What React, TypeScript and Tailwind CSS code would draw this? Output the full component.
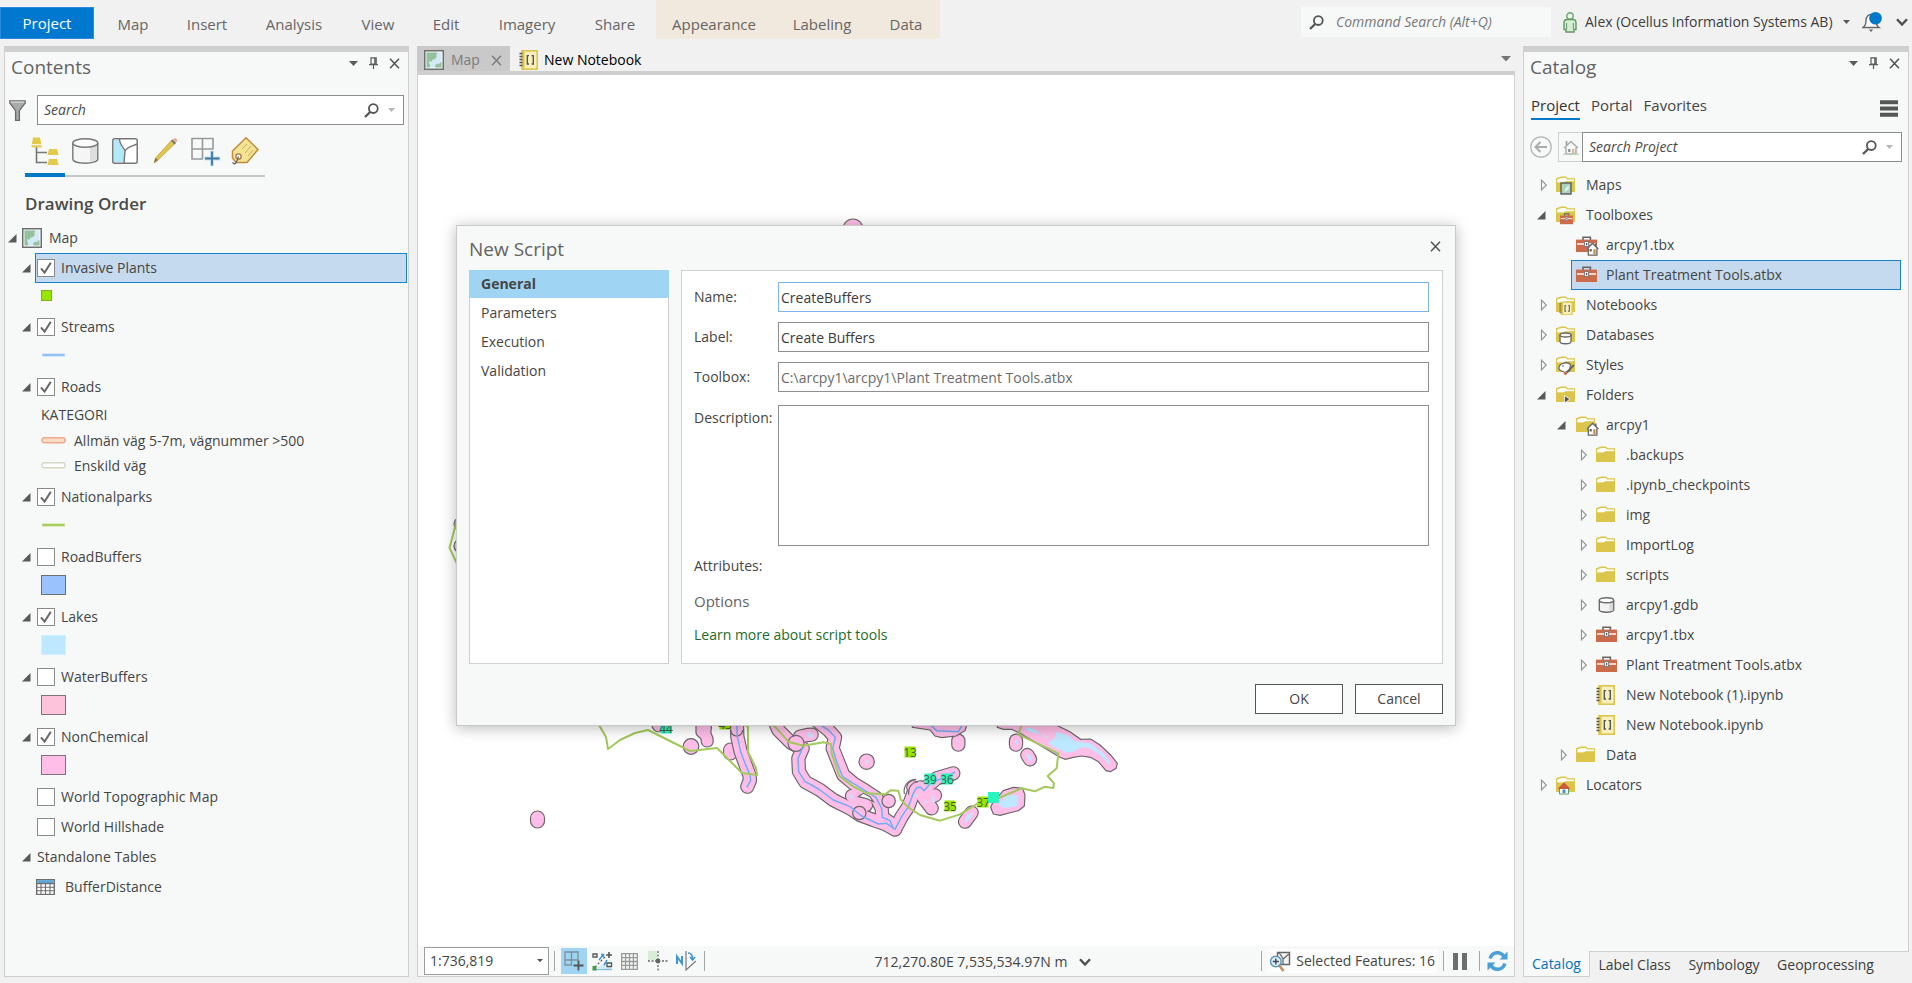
import React, { type ReactNode } from "react";

/* ---------- icons ---------- */

type BoxProps = { w: number; h: number; children: ReactNode; className?: string };

function Icon({ w, h, children, className = "" }: BoxProps) {
  return (
    <svg width={w} height={h} viewBox={`0 0 ${w} ${h}`} fill="none" aria-hidden="true" className={`shrink-0 ${className}`}>
      {children}
    </svg>
  );
}

const CloseIcon = ({ color = "#505050" }: { color?: string }) => (
  <Icon w={11} h={11}>
    <path d="M1 0.8 10 10.2M10 0.8 1 10.2" stroke={color} strokeWidth="1.5" />
  </Icon>
);

const PinIcon = () => (
  <Icon w={9} h={12}>
    <path d="M2 0.8h5.2v6.4H2zM0 7.6h9M4.5 7.6V12" stroke="#5a5a5a" strokeWidth="1.2" />
    <path d="M6 1v6" stroke="#5a5a5a" strokeWidth="1.6" />
  </Icon>
);

const DownIcon = ({ color = "#5a5a5a", size = 9 }: { color?: string; size?: number }) => (
  <svg width={size} height={(size * 5) / 9} viewBox="0 0 9 5" aria-hidden="true" className="shrink-0">
    <path d="M0 0h9L4.5 5z" fill={color} />
  </svg>
);

const ChevronIcon = () => (
  <Icon w={12} h={9}>
    <path d="M1 1.2 6 6.6 11 1.2" stroke="#4f4f4f" strokeWidth="2.4" />
  </Icon>
);

const SearchIcon = ({ color = "#555" }: { color?: string }) => (
  <Icon w={15} h={15}>
    <circle cx="9.3" cy="5.6" r="4.4" stroke={color} strokeWidth="1.8" />
    <path d="M6.2 9 1 14" stroke={color} strokeWidth="2.4" />
  </Icon>
);

const FilterIcon = () => (
  <Icon w={17} h={21}>
    <path d="M0.8 1h15.4v2L10.4 10.6V20.4H6.6V10.6L0.8 3z" fill="#a9a9a9" stroke="#6a6a6a" strokeWidth="1.3" />
    <path d="M1.5 2h14" stroke="#f2f2f2" strokeWidth="1" />
  </Icon>
);

const MapIcon = () => (
  <Icon w={20} h={20}>
    <rect x="0.75" y="0.75" width="18.5" height="18.5" fill="#fff" stroke="#6e6e6e" strokeWidth="1.5" />
    <rect x="2.5" y="2.5" width="15" height="15" fill="#d3e9f8" />
    <path d="M2.5 2.5H13.5l-1.2 2.2.4 2.3-2 2.2-2 .3-1.2 2.3-2-.7-.6 2.5 1.4 1.2-.4 2.7H2.5z" fill="#96c29b" />
    <path d="M17.5 17.5h-6l-.4-1.8 1.6-2 2.3.4 1.6-1.8h.9z" fill="#96c29b" />
  </Icon>
);

const NotebookGlyph = () => (
  <>
    <rect x="3" y="0.8" width="15.2" height="18.4" fill="#f7f0bd" stroke="#dcc649" strokeWidth="1.6" />
    <path d="M4.6 1.5v17" stroke="#dcc649" strokeWidth="2" />
    <path d="M0.5 3.5h3M0.5 6.5h3M0.5 9.5h3M0.5 12.5h3M0.5 15.5h3" stroke="#555" strokeWidth="1.3" />
    <path d="M10 5.6H8.3v8.4H10M12.6 5.6h1.7v8.4h-1.7" stroke="#555" strokeWidth="1.4" />
  </>
);

const NotebookIcon = () => (
  <Icon w={20} h={20}>
    <NotebookGlyph />
  </Icon>
);

const FolderShape = () => (
  <>
    <path d="M0 2.2 5 0.6h5L11.5 2.2H19V16H0z" fill="#dbc54a" />
    <path d="M1.2 3.6 5.6 2H9.6L11 3.4h7v2.400H9L7.5 6.800H1.2z" fill="#fff" />
    <path d="M0 6.600h7.500L9.500 5.200H19V16H0z" fill="#dbc54a" />
  </>
);

const FolderIcon = ({ children }: { children?: ReactNode }) => (
  <Icon w={22} h={20}>
    <g transform="translate(0 1)">
      <FolderShape />
    </g>
    {children}
  </Icon>
);

const ToolboxShape = () => (
  <>
    <path d="M7 4V1.2h7.4V4" stroke="#666" strokeWidth="1.6" fill="none" />
    <path d="M0 3.6h21V16H0z" fill="#cb6b4a" />
    <path d="M1 8h19" stroke="#fff" strokeWidth="1.4" />
    <rect x="8.6" y="5.6" width="4" height="5" fill="#f5f5f5" stroke="#777" strokeWidth="0.9" />
    <path d="M10.6 7v2.2" stroke="#555" strokeWidth="1.2" />
  </>
);

const HomeBadge = () => (
  <>
    <path d="M10.5 14 16.500 7.500 22.500 14z" fill="#fff" />
    <path d="M12.300 13.500v6.700h8.600v-6.700L16.600 9z" fill="#fff" />
    <path d="M12.300 13.500v6.600h8.600v-6.600" stroke="#666" strokeWidth="1.300" />
    <path d="M11 14 16.600 8.200 22.300 14M19.800 8.500v3" stroke="#666" strokeWidth="1.500" />
    <path d="M13.600 14h2.200v2.500h-2.200z" fill="#666" />
    <path d="M17.300 14.200h2.300v5.300h-2.300z" fill="#c98b4a" />
  </>
);

const ToolboxIcon = ({ home = false }: { home?: boolean }) => (
  <Icon w={23} h={21}>
    <g transform="translate(0 1)">
      <ToolboxShape />
    </g>
    {home && <HomeBadge />}
  </Icon>
);

const DbIcon = () => (
  <Icon w={20} h={20}>
    <g transform="translate(2.5 2)">
      <path d="M0.8 3.2v9.6c0 3.2 14.4 3.2 14.4 0V3.2" fill="#f4f4f4" stroke="#6b6b6b" strokeWidth="1.4" />
      <path d="M11 6v8.6l3.6-1.2V4.8z" fill="#d8d8d8" />
      <ellipse cx="8" cy="3.2" rx="7.2" ry="2.5" fill="#fff" stroke="#6b6b6b" strokeWidth="1.4" />
    </g>
  </Icon>
);

const TableIcon = () => (
  <Icon w={19} h={16}>
    <rect x="0.7" y="0.7" width="17.6" height="14.8" fill="#fff" stroke="#6e6e6e" strokeWidth="1.4" />
    <rect x="1.4" y="1.2" width="16.2" height="3" fill="#5ba6d6" />
    <path d="M0.7 4.6h17.6M0.7 8.2h17.6M0.7 11.8h17.6M5 4.6v11M9.5 4.6v11M14 4.6v11" stroke="#6e6e6e" strokeWidth="1.1" />
  </Icon>
);

/* ---------- contents toolbar icons ---------- */

const ListOrderIcon = () => (
  <Icon w={28} h={28}>
    <path d="M5.5 9v16.5H16M5.5 15.5H16" stroke="#777" strokeWidth="1.6" />
    <path d="M2 0.5h7l1.3 7H0.7z" fill="#e2cb48" />
    <path d="M0.5 8h10.2v2.4H0.5z" fill="#e2cb48" />
    <path d="M0.8 7.8h9.6" stroke="#fff" strokeWidth="0.9" />
    <path d="M18 12h8l1.5 6H16.4zM18 22h8l1.5 6H16.4z" fill="#e2cb48" />
  </Icon>
);

const SourceIcon = () => (
  <Icon w={27} h={26}>
    <path d="M0.8 5v16c0 5.6 25 5.6 25 0V5" fill="#f5f5f5" stroke="#777" strokeWidth="1.4" />
    <path d="M18 9.5v14.6l7-2.5V6z" fill="#dedede" />
    <ellipse cx="13.3" cy="5" rx="12.5" ry="4.2" fill="#fafafa" stroke="#777" strokeWidth="1.4" />
  </Icon>
);

const SelectionIcon = () => (
  <Icon w={26} h={26}>
    <rect x="0.8" y="0.8" width="24.4" height="24.4" rx="2" fill="#fff" stroke="#777" strokeWidth="1.5" />
    <path d="M2 2h5.5c0 6 5 9 5.5 12l-1 10H2z" fill="#b3e8f8" />
    <path d="M7.5 1c0 6 5 9 5.5 12l-1 12M13 13c1.5-4 6-4.500 12-7" stroke="#777" strokeWidth="1.4" />
  </Icon>
);

const PencilIcon = () => (
  <Icon w={25} h={26}>
    <path d="M19 1.800 22.500 5 5 22 1.500 24.500 2.500 20z" fill="#dfc64a" stroke="#b89f2e" strokeWidth="0.7" />
    <path d="M18 3l3.500 3.500 1.500-1.500-3.500-3.500z" fill="#777" />
    <path d="M20 1.200 21.500 0.200c1.500-.2 3 1.300 2.700 2.800L23 4.300z" fill="#e8a094" />
    <path d="M2.500 20 5 22 0.800 25.200z" fill="#9a6a3a" />
  </Icon>
);

const SnapIcon = () => (
  <Icon w={29} h={29}>
    <path d="M1 1.500h21v10.500H1zM11.500 1.500V22M1 12v10h11" stroke="#999" strokeWidth="1.600" />
    <path d="M21 14v15M13.500 21.500H29" stroke="#b9dff6" strokeWidth="4" />
    <path d="M21 14.500v14M14 21.500h14.500" stroke="#47749a" strokeWidth="1.800" />
  </Icon>
);

const TagIcon = () => (
  <Icon w={28} h={28}>
    <path d="M15 0.800 27 12.500 16 25.500H5L1.500 21V14z" fill="#f3e493" stroke="#bd8d3c" strokeWidth="1.500" />
    <path d="M11 12l5-5M14 16l6-7M17 19l5-6" stroke="#d4a862" strokeWidth="1" />
    <circle cx="7.500" cy="19.500" r="2.700" fill="#fff" stroke="#a8703c" strokeWidth="1.300" />
    <path d="M7.500 19.500C6.500 22 6 26 3.500 27L1.500 25.500" stroke="#666" strokeWidth="1.300" />
  </Icon>
);

/* ---------- shared parts ---------- */

const Expander = ({ open }: { open: boolean }) => (
  <button type="button" aria-label={open ? "Collapse" : "Expand"} className="flex shrink-0 items-center">
    {open ? (
      <Icon w={9} h={9}>
        <path d="M8.500 0V8.500H0z" fill="#595959" />
      </Icon>
    ) : (
      <Icon w={8} h={12}>
        <path d="M1.500 1.200 6.200 6 1.500 10.800z" fill="#fff" stroke="#949494" strokeWidth="1.200" />
      </Icon>
    )}
  </button>
);

function PanelTitle({ children }: { children: ReactNode }) {
  return (
    <div className="flex h-[30px] items-center justify-between pr-2 pl-1.5">
      <h2 className="text-[19px] leading-6 text-[#636363]">{children}</h2>
      <div className="flex items-center gap-[11px] pb-2">
        <button type="button" aria-label="Window options">
          <DownIcon />
        </button>
        <button type="button" aria-label="Auto hide">
          <PinIcon />
        </button>
        <button type="button" aria-label="Close pane">
          <CloseIcon />
        </button>
      </div>
    </div>
  );
}

function SearchBox({ id, text }: { id: string; text: string }) {
  return (
    <div className="flex h-[30px] min-w-0 flex-1 items-center gap-[9px] border border-[#8c8c8c] bg-white pr-2 pl-1.5">
      <input
        id={id}
        aria-label={text}
        placeholder={text}
        className="min-w-0 flex-1 bg-transparent text-sm italic outline-none placeholder:text-[#4a4a4a]"
      />
      <button type="button" aria-label="Run search">
        <SearchIcon />
      </button>
      <DownIcon color="#b5b5b5" size={7} />
    </div>
  );
}

/* ---------- ribbon ---------- */

const ribbonTabs = [
  { name: "Map", width: "w-[70px]" },
  { name: "Insert", width: "w-[78px]" },
  { name: "Analysis", width: "w-[96px]" },
  { name: "View", width: "w-[72px]" },
  { name: "Edit", width: "w-[64px]" },
  { name: "Imagery", width: "w-[98px]" },
  { name: "Share", width: "w-[78px]" },
];

const contextTabs = [
  { name: "Appearance", width: "w-[116px]" },
  { name: "Labeling", width: "w-[100px]" },
  { name: "Data", width: "w-[68px]" },
];

function Ribbon() {
  return (
    <header className="flex h-[46px] shrink-0 items-start justify-between">
      <nav className="flex h-[39px] text-[15px] text-[#666]">
        <button type="button" className="mt-[7px] w-[94px] border border-[#2a8adf] bg-[#0078d0] pb-1 text-white">
          <span className="block pt-1">Project</span>
        </button>
        <div className="ml-1 flex">
          {ribbonTabs.map((t) => (
            <button key={t.name} type="button" className={`pt-[9px] ${t.width}`}>
              {t.name}
            </button>
          ))}
        </div>
        <div className="ml-0.5 flex bg-[#f1e9de]">
          {contextTabs.map((t) => (
            <button key={t.name} type="button" className={`pt-[9px] ${t.width}`}>
              {t.name}
            </button>
          ))}
        </div>
      </nav>
      <div className="flex items-center pt-[7px] pr-1">
        <div className="flex h-[30px] w-[250px] items-center gap-3 bg-[#f7f9f8] px-2">
          <SearchIcon />
          <input
            aria-label="Command Search"
            placeholder="Command Search (Alt+Q)"
            className="min-w-0 flex-1 bg-transparent text-sm italic outline-none placeholder:text-[#777]"
          />
        </div>
        <button type="button" className="ml-3 flex items-center gap-2 text-sm text-[#3c3c3c]">
          <Icon w={14} h={21}>
            <circle cx="7" cy="4" r="3.200" fill="#eaf5ea" stroke="#6ea56e" strokeWidth="1.400" />
            <path d="M1 11c0-2.500 1.500-3.500 3-3.500h6c1.500 0 3 1 3 3.500v6.500h-2V20H3v-2.500H1z" fill="#d7ecd5" stroke="#5f9b60" strokeWidth="1.400" />
            <path d="M3.600 11v6M10.400 11v6" stroke="#5f9b60" strokeWidth="1" />
          </Icon>
          <span className="w-[250px] text-left whitespace-nowrap">Alex (Ocellus Information Systems AB)</span>
          <DownIcon size={7} />
        </button>
        <button type="button" aria-label="Notifications" className="ml-3">
          <Icon w={20} h={20}>
            <path d="M1 15.500c3-2 3-4 3-7 0-4 2.500-6 5-6s5 2 5 6c0 3 0 5 3 7z" fill="#fff" stroke="#666" strokeWidth="1.400" />
            <path d="M6.800 17.500h4.400L9 20z" fill="#666" />
            <circle cx="13.500" cy="6.300" r="6.300" fill="#0079c8" />
          </Icon>
        </button>
        <button type="button" aria-label="Minimize ribbon" className="ml-3.5">
          <ChevronIcon />
        </button>
      </div>
    </header>
  );
}

/* ---------- contents pane ---------- */

function Check({ name, checked }: { name: string; checked: boolean }) {
  return (
    <span className="grid shrink-0">
      <input
        id={`layer-${name}`}
        type="checkbox"
        defaultChecked={checked}
        className="peer col-start-1 row-start-1 size-[18px] appearance-none border border-[#8a8a8a] bg-white"
      />
      <svg
        viewBox="0 0 18 18"
        aria-hidden="true"
        className="pointer-events-none invisible col-start-1 row-start-1 size-[18px] peer-checked:visible"
      >
        <path d="M4 9.300 7.600 13.600 13.800 3.800" fill="none" stroke="#666" strokeWidth="2" />
      </svg>
    </span>
  );
}

type LayerProps = { name: string; checked?: boolean; selected?: boolean; leaf?: boolean };

function Layer({ name, checked = false, selected = false, leaf = false }: LayerProps) {
  const tone = selected ? "border-[#1a7fc4] bg-[#c5daee]" : "border-transparent";
  return (
    <div className="flex h-[30px] items-center pr-px pl-[17px]">
      <div className="w-[13px]">{!leaf && <Expander open />}</div>
      <div className={`flex h-full flex-1 items-center gap-1.5 border pl-px ${tone}`}>
        <Check name={name} checked={checked} />
        <label htmlFor={`layer-${name}`}>{name}</label>
      </div>
    </div>
  );
}

const SymbolRow = ({ children }: { children: ReactNode }) => (
  <div className="flex h-[30px] items-center pb-1 pl-9">{children}</div>
);

const LineSymbol = ({ color, halo }: { color: string; halo: string }) => (
  <Icon w={25} h={6}>
    <path d="M1 3h23" stroke={halo} strokeWidth="3.500" />
    <path d="M1.500 3h22" stroke={color} strokeWidth="1.800" />
  </Icon>
);

const RoadSymbol = ({ fill, line }: { fill: string; line: string }) => (
  <Icon w={25} h={7}>
    <rect x="0.800" y="0.800" width="23.400" height="5" rx="2.500" fill={fill} stroke={line} strokeWidth="1.400" />
  </Icon>
);

const listModes = [
  { name: "List by drawing order", icon: <ListOrderIcon /> },
  { name: "List by source", icon: <SourceIcon /> },
  { name: "List by selection", icon: <SelectionIcon /> },
  { name: "List by editing", icon: <PencilIcon /> },
  { name: "List by snapping", icon: <SnapIcon /> },
  { name: "List by labeling", icon: <TagIcon /> },
];

function ContentsPane() {
  return (
    <aside className="w-[405px] shrink-0 border border-t-[6px] border-[#cfcfcf] bg-[#f7f9f8]">
      <PanelTitle>Contents</PanelTitle>
      <div className="mt-[13px] flex items-center gap-[11px] px-1">
        <FilterIcon />
        <SearchBox id="contents-search" text="Search" />
      </div>
      <div className="mt-1 ml-5 flex items-end">
        {listModes.map((m, i) => (
          <button
            key={m.name}
            type="button"
            aria-label={m.name}
            className={`flex h-12 w-10 items-center justify-center ${i === 0 ? "border-b-4 border-[#0079c8]" : "border-b-2 border-[#c6c6c6] pb-0.5"}`}
          >
            {m.icon}
          </button>
        ))}
      </div>
      <h3 className="mt-[13px] pl-5 text-[17px] leading-7 font-semibold text-[#4a4a4a]">Drawing Order</h3>
      <div className="mt-[5px] text-sm text-[#454545]">
        <div className="flex h-[30px] items-center pl-[3px]">
          <div className="w-3.5">
            <Expander open />
          </div>
          <MapIcon />
          <span className="pl-[7px]">Map</span>
        </div>
        <Layer name="Invasive Plants" checked selected />
        <div className="flex h-[29px] items-center pb-1 pl-9">
          <span className="size-[11px] border border-[#7fae22] bg-[#98e600]" />
        </div>
        <Layer name="Streams" checked />
        <SymbolRow>
          <LineSymbol color="#8dbdfb" halo="#cfe3fd" />
        </SymbolRow>
        <Layer name="Roads" checked />
        <div className="flex h-[26px] items-center pl-9 font-medium">KATEGORI</div>
        <div className="flex h-[25px] items-center gap-2 pl-9">
          <RoadSymbol fill="#fcdcc6" line="#eeaa8e" />
          Allmän väg 5-7m, vägnummer &gt;500
        </div>
        <div className="mb-1 flex h-[25px] items-center gap-2 pl-9">
          <RoadSymbol fill="#fff" line="#d5d7c3" />
          Enskild väg
        </div>
        <Layer name="Nationalparks" checked />
        <SymbolRow>
          <LineSymbol color="#a3cc55" halo="#d5e7b4" />
        </SymbolRow>
        <Layer name="RoadBuffers" />
        <SymbolRow>
          <span className="h-5 w-[25px] border border-[#6e6e6e] bg-[#9ac2fc]" />
        </SymbolRow>
        <Layer name="Lakes" checked />
        <SymbolRow>
          <span className="h-5 w-[25px] border border-[#d3effe] bg-[#bee8ff]" />
        </SymbolRow>
        <Layer name="WaterBuffers" />
        <SymbolRow>
          <span className="h-5 w-[25px] border border-[#807279] bg-[#fcc3da]" />
        </SymbolRow>
        <Layer name="NonChemical" checked />
        <SymbolRow>
          <span className="h-5 w-[25px] border border-[#80707c] bg-[#ffbee8]" />
        </SymbolRow>
        <Layer name="World Topographic Map" leaf />
        <Layer name="World Hillshade" leaf />
        <div className="flex h-[30px] items-center pl-[17px]">
          <div className="w-[15px]">
            <Expander open />
          </div>
          <span className="font-medium">Standalone Tables</span>
        </div>
        <div className="flex h-[30px] items-center gap-2.5 pl-[31px]">
          <TableIcon />
          <span>BufferDistance</span>
        </div>
      </div>
    </aside>
  );
}

/* ---------- map canvas ---------- */

type LabelProps = { x: number; y: number; text: string; color: string };

const MapLabel = ({ x, y, text, color }: LabelProps) => (
  <g>
    <rect x={x - 5.5} y={y - 5.5} width="11" height="11" fill={color} />
    <text x={x} y={y + 4.5} textAnchor="middle" fontSize="12" fontFamily="'Open Sans', sans-serif" fill="#4b5f40">
      {text}
    </text>
  </g>
);

const riverOutlines = [
  "M50 50 52 110 62 155 75 190 88 225 90 240 82 260",
  "M160 55 175 90 215 130 248 145 235 175 237 215 255 245 300 270 340 300 390 325 420 345 460 360 495 372 525 388",
  "M290 62 325 90 345 112 338 145 350 175 370 225 400 250 440 275 470 295 485 325 487 352 520 375",
  "M525 388 545 350 565 320 580 280 600 262 615 265 650 235 700 220",
  "M240 110 262 105 275 104",
  "M396 288 410 300 438 315",
  "M580 262 605 285 635 325M615 300 645 286",
  "M715 122 715 134",
  "M888 122 888 134",
  "M922 165 930 178",
  "M735 365 755 338",
];

function MapCanvas() {
  return (
    <svg
      viewBox="418 75 1096 871"
      preserveAspectRatio="xMinYMin slice"
      fill="none"
      role="img"
      aria-label="Map"
      className="block size-full"
    >
      <circle cx="853" cy="229" r="10" fill="#ffbee8" stroke="#6b666a" strokeWidth="1.2" />
      <circle cx="460" cy="524" r="6" fill="#ffbee8" stroke="#6b666a" strokeWidth="1.2" />
      <circle cx="461" cy="546" r="7" fill="#ffbee8" stroke="#6b666a" strokeWidth="1.2" />
      <path d="M459 512 449.500 548 460 570" stroke="#a3c95c" strokeWidth="2" />

      <g fill="#ffbee8" stroke="#6b666a" strokeWidth="1.2">
        <rect x="530.500" y="811" width="14" height="17" rx="7" />
        <circle cx="659" cy="725" r="7" />
        <circle cx="691" cy="746.500" r="7.800" />
        <path d="M696 720v13c0 3 4 4 5 6 0 3 1 8 6 8s7-4 6-8c0-4-3-5-2-8l1-11z" />
        <rect x="723.500" y="743" width="14" height="17" rx="7" />
        <circle cx="857" cy="721" r="4.500" />
      </g>

      <g transform="translate(720 700) scale(0.33333)">
        <g strokeLinecap="round" strokeLinejoin="round">
          {riverOutlines.map((d) => (
            <path key={d} d={d} stroke="#6b666a" strokeWidth="43" />
          ))}
          {riverOutlines.map((d) => (
            <path key={d} d={d} stroke="#ffbee8" strokeWidth="36" />
          ))}
        </g>
        <g stroke="#6b666a" strokeWidth="3.500">
          <circle cx="440" cy="185" r="23" fill="#ffbee8" />
          <circle cx="506" cy="303" r="20" fill="#ffbee8" />
          <circle cx="418" cy="339" r="20" />
          <circle cx="228" cy="130" r="24" />
          <path d="M32 90a18 18 0 0 0 36 0" />
          <path d="M553 282c-4-28 14-44 36-44M566 284c-2-22 10-38 28-38" />
          <path d="M575 62 577 82 630 90 645 108 665 113 708 108 735 92 745 62z" fill="#ffbee8" />
          <path d="M832 62 832 82 850 88 875 88 900 100 1020 172 1036 178 1060 172 1085 168 1112 172 1135 185 1158 212 1172 215 1188 205 1192 190 1172 165 1140 135 1112 117 1082 118 1050 95 1010 76 990 62z" fill="#ffbee8" />
          <path d="M812 322 818 308 850 272 880 262 908 265 915 285 913 318 895 332 840 346 820 342z" fill="#ffbee8" strokeLinejoin="round" />
          <circle cx="413" cy="64" r="12" />
        </g>
        <g fill="#bee8ff">
          <path d="M985 128 1005 112 1010 95 1025 100 1048 108 1062 122 1090 128 1110 128 1150 160 1172 190 1165 192 1140 165 1110 145 1085 142 1060 155 1035 158 1020 148 1000 142z" />
          <path d="M835 312 850 300 855 288 888 284 896 290 892 318 868 322 850 324z" />
          <path d="M733 366 742 345 760 336 752 352 740 366z" />
          <path d="M258 100 270 97 280 108 272 114z" />
          <path d="M918 160 930 164 938 185 928 182z" />
          <path d="M435 183 445 181 446 187 438 190z" />
          <path d="M385 280 400 290 400 298 390 292z" />
          <path d="M636 290 642 288 644 306 638 310z" />
          <path d="M584 282 594 284 592 292 582 288z" />
          <path d="M612 304 622 302 620 308 614 310z" />
          <path d="M915 82 945 88 962 102 940 98 922 92z" />
          <path d="M965 100 985 112 978 114z" />
          <path d="M884 122 892 120 890 134z" />
          <path d="M712 122 716 120 716 130z" />
        </g>
        <g fill="#fff" stroke="#6b666a" strokeWidth="3.500">
          <path d="M415 290 430 280 450 290 460 305 440 296z" />
        </g>
        <g stroke="#72adf7" strokeWidth="4.500" strokeLinejoin="round">
          <path d="M50 62 52 110 62 155 75 190 90 225 92 242 80 262" />
          <path d="M248 143 234 175 236 215 255 245 275 255 300 270 340 300 390 320 425 348 475 372 500 370 525 388 545 350 565 320 580 280 590 263 602 262 612 272 632 250 665 235 690 225 705 216" />
          <path d="M290 68 325 90 346 112 338 145 350 185 368 230 400 250 440 275 468 292 485 325 487 352 510 362 520 385" />
          <path d="M632 75 650 92 715 95 725 78" />
        </g>
        <path
          d="M135 62 165 80 205 125 250 137 310 127 333 132 335 160 358 228 400 260 440 280 495 283 512 271 535 272 542 298 565 322 600 345 660 362 720 343 790 300 820 300 850 288 905 265 945 274 975 260 1000 264 1002 250 983 228 1010 205 1015 160 895 103 905 75"
          stroke="#a3c95c"
          strokeWidth="6"
          strokeLinejoin="round"
        />
      </g>
      <path
        d="M596 720 599 725 606 737 608 749 620 740 635 733 648 730 690 751 717 748 742 773 757 775 756 768 748 752 748 727 741 722"
        stroke="#a3c95c"
        strokeWidth="2"
        strokeLinejoin="round"
      />
      <MapLabel x={666} y={728} text="44" color="#26f5c0" />
      <MapLabel x={725} y={724} text="43" color="#98e600" />
      <MapLabel x={910} y={752} text="13" color="#98e600" />
      <MapLabel x={930} y={779} text="39" color="#26f5c0" />
      <MapLabel x={947} y={779} text="36" color="#26f5c0" />
      <MapLabel x={950} y={806} text="35" color="#98e600" />
      <MapLabel x={983} y={802} text="37" color="#98e600" />
      <rect x="988" y="792" width="11" height="11" fill="#26f5c0" />
    </svg>
  );
}

/* ---------- centre view ---------- */

const Divider = () => <span className="h-5 w-px shrink-0 bg-[#a5a5a5]" />;

function StatusBar() {
  return (
    <footer className="grid h-[30px] shrink-0 grid-cols-[1fr_auto_1fr] items-center bg-[#f7f9f8] px-1.5 text-sm text-[#454545]">
      <div className="flex items-center">
        <div className="grid w-[125px] items-center">
          <select
            aria-label="Map scale"
            className="col-start-1 row-start-1 h-7 w-full appearance-none border border-[#9c9c9c] bg-white pl-[5px] text-sm"
          >
            <option>1:736,819</option>
          </select>
          <span className="pointer-events-none col-start-1 row-start-1 justify-self-end pr-1.5">
            <DownIcon size={6} />
          </span>
        </div>
        <span className="flex items-center pl-[5px]">
          <Divider />
        </span>
        <button type="button" aria-label="Snapping" className="ml-1.5 flex h-[26px] w-[26px] items-center justify-center bg-[#9fd4f3]">
          <Icon w={20} h={20}>
            <path d="M1 1h13v8H1zM7.500 1v13M1 9v5h7" stroke="#7d8f9b" strokeWidth="1.300" />
            <path d="M14.500 9.500v10M9.500 14.500h10" stroke="#555" strokeWidth="1.800" />
          </Icon>
        </button>
        <button type="button" aria-label="Dynamic constraints" className="ml-[5px]">
          <Icon w={21} h={20}>
            <path d="M3 17 19 10v8z" fill="#cfeaf6" />
            <path d="M1 3h4v3H1zM15 12h4.500v3.500H15z" fill="#fff" stroke="#555" strokeWidth="1.300" />
            <path d="M17 1v6M14 4h6" stroke="#555" strokeWidth="1.600" />
            <path d="M3 16 14 5" stroke="#555" strokeWidth="1.200" strokeDasharray="2 2" />
            <path d="M7 9l4-5M9 3.500h2.500V6M12 14l3-5" stroke="#3f95d0" strokeWidth="1.500" />
            <path d="M2 18.500h18" stroke="#7bbce6" strokeWidth="1.300" />
            <rect x="0.500" y="15" width="4" height="4.500" fill="#459a4b" />
          </Icon>
        </button>
        <button type="button" aria-label="Grid" className="ml-2">
          <Icon w={17} h={17}>
            <path d="M0.700 0.700h15.600v15.600H0.700zM4.600 0.700v15.600M8.500 0.700v15.600M12.400 0.700v15.600M0.700 4.600h15.600M0.700 8.500h15.600M0.700 12.400h15.600" stroke="#999" strokeWidth="1.300" />
          </Icon>
        </button>
        <button type="button" aria-label="Inference" className="ml-2.5">
          <Icon w={20} h={20}>
            <rect width="9" height="9" fill="#d9ecd5" />
            <path d="M10 0v20M0 10h20" stroke="#666" strokeWidth="1.300" strokeDasharray="2 1.500" />
            <rect x="8" y="8" width="4" height="4" fill="#666" />
          </Icon>
        </button>
        <button type="button" aria-label="North direction" className="ml-2">
          <Icon w={20} h={20}>
            <path d="M1 13V5.500l5 7V5" stroke="#3f95d0" strokeWidth="2" />
            <path d="M10 0v19L20 10" stroke="#777" strokeWidth="1.200" />
            <path d="M12 2c3 0 4.500 2 4.500 6M14 6l2.500 3L19 6" stroke="#3f95d0" strokeWidth="1.600" />
          </Icon>
        </button>
        <span className="flex items-center pl-2">
          <Divider />
        </span>
      </div>
      <div className="flex items-center gap-3 pt-0.5 pl-[34px]">
        <span className="whitespace-nowrap">712,270.80E 7,535,534.97N m</span>
        <button type="button" aria-label="Coordinate format">
          <ChevronIcon />
        </button>
      </div>
      <div className="flex items-center justify-end">
        <Divider />
        <button type="button" className="ml-[5px] flex h-6 items-center gap-[5px] bg-[#fdfdfd] pr-[3px] pl-0.5 whitespace-nowrap">
          <Icon w={22} h={21}>
            <path d="M8.500 1.500h12v12h-12z" fill="#f2f2f2" stroke="#666" strokeWidth="1.400" />
            <path d="M9 2c3 0 3 3 5 6l6-5M14 8v5" stroke="#666" strokeWidth="1.200" />
            <path d="m10 14 4.500 6" stroke="#c99058" strokeWidth="2.600" />
            <circle cx="6.800" cy="10.500" r="5.300" fill="#d9effa" stroke="#5b93b8" strokeWidth="1.400" />
            <path d="M6.800 7.500v6M3.800 10.500h6" stroke="#444" strokeWidth="1.400" />
          </Icon>
          Selected Features: 16
        </button>
        <span className="flex items-center px-[5px]">
          <Divider />
        </span>
        <button type="button" aria-label="Pause drawing" className="mr-[11px] ml-1">
          <Icon w={15} h={17}>
            <path d="M0 0h5v17H0zM9 0h5v17H9z" fill="#6c6c6c" />
          </Icon>
        </button>
        <Divider />
        <button type="button" aria-label="Refresh" className="ml-[7px]">
          <Icon w={21} h={20}>
            <path d="M3 7.500C5.500 0.500 13.500 0 17 5.500" stroke="#4a9fd9" strokeWidth="3.400" />
            <path d="M20.500 0.500V8.500H12.500z" fill="#4a9fd9" />
            <path d="M18 12.500C15.500 19.500 7.500 20 4 14.500" stroke="#4a9fd9" strokeWidth="3.400" />
            <path d="M0.500 19.500V11.500H8.500z" fill="#4a9fd9" />
          </Icon>
        </button>
      </div>
    </footer>
  );
}

function MapView() {
  return (
    <main className="flex min-w-0 flex-1 flex-col">
      <div className="flex h-[29px] shrink-0 items-center justify-between border-b-4 border-[#cfcfcf] pr-1">
        <div className="flex h-full items-center text-sm">
          <div className="flex h-full w-[93px] items-center bg-[#c9c9c9] pt-[3px] pl-[7px] text-[#7b7b7b]">
            <MapIcon />
            <span className="w-[47px] pl-[7px]">Map</span>
            <button type="button" aria-label="Close Map">
              <CloseIcon color="#7b7b7b" />
            </button>
          </div>
          <button type="button" className="flex items-center gap-[5px] pt-[3px] pl-[9px] text-black">
            <NotebookIcon />
            New Notebook
          </button>
        </div>
        <button type="button" aria-label="Open views">
          <DownIcon color="#757575" size={10} />
        </button>
      </div>
      <div className="flex flex-1 flex-col border border-t-0 border-[#cfcfcf]">
        <div className="min-h-0 flex-1 basis-0 overflow-hidden bg-white">
          <MapCanvas />
        </div>
        <StatusBar />
      </div>
    </main>
  );
}

/* ---------- catalog pane ---------- */

const indent = ["pl-[13px]", "pl-[33px]", "pl-[53px]"];

type NodeProps = { level?: 0 | 1 | 2; name: string; icon: ReactNode; open?: boolean; selected?: boolean };

function TreeNode({ level = 0, name, icon, open, selected = false }: NodeProps) {
  const tone = selected ? "border-[#1a7fc4] bg-[#c5daee]" : "border-transparent";
  return (
    <li className={`flex h-[30px] items-center pr-[7px] ${indent[level]}`}>
      <div className={`w-3.5 ${open ? "" : "pl-[3px]"}`}>{open !== undefined && <Expander open={open} />}</div>
      <div className={`flex h-full flex-1 items-center border pl-1 ${tone}`}>
        <span className="w-[30px]">{icon}</span>
        <span>{name}</span>
      </div>
    </li>
  );
}

const catalogTabs = [
  { name: "Label Class", width: "w-[89px]" },
  { name: "Symbology", width: "w-[90px]" },
  { name: "Geoprocessing", width: "w-[113px]" },
];

function CatalogPane() {
  return (
    <aside className="flex w-[386px] shrink-0 flex-col">
      <div className="flex-1 border-x border-t-[6px] border-[#cfcfcf] bg-[#f7f9f8]">
        <PanelTitle>Catalog</PanelTitle>
        <div className="mt-[10px] flex items-center justify-between pr-2.5 pl-[7px] text-[15px] text-[#454545]">
          <div className="flex h-7 gap-[11px]">
            <button type="button" className="h-full border-b-2 border-[#0079c8] font-medium text-[#333]">
              Project
            </button>
            <button type="button" className="h-full border-b-2 border-transparent">
              Portal
            </button>
            <button type="button" className="h-full border-b-2 border-transparent">
              Favorites
            </button>
          </div>
          <button type="button" aria-label="Menu" className="pt-1">
            <Icon w={18} h={17}>
              <path d="M0 2.200h18M0 8.500h18M0 14.800h18" stroke="#555" strokeWidth="4" />
            </Icon>
          </button>
        </div>
        <div className="mt-3 flex items-center px-1.5">
          <button type="button" aria-label="Back" className="mr-1.5">
            <Icon w={22} h={22}>
              <circle cx="11" cy="11" r="10.200" stroke="#b3b3b3" strokeWidth="1.200" />
              <path d="M17 11H6M10.500 6 5.500 11l5 5" stroke="#ababab" strokeWidth="2" />
            </Icon>
          </button>
          <button type="button" aria-label="Home" className="flex h-[30px] w-6 items-center justify-center border border-r-0 border-[#cfcfcf]">
            <Icon w={16} h={15}>
              <path d="M1 8 8 1.500 15 8M3 7.500V14h10V7.500" stroke="#ababab" strokeWidth="1.500" />
              <path d="M3.500 1v4" stroke="#999" strokeWidth="1.600" />
              <path d="M5 9h2.500v3H5z" fill="#999" />
              <path d="M9 9h2.500v5H9z" fill="#d9bfa5" />
              <path d="M0 14.300h16" stroke="#bcd3bc" strokeWidth="1.200" />
            </Icon>
          </button>
          <SearchBox id="catalog-search" text="Search Project" />
        </div>
        <ul className="mt-2 text-sm text-[#454545]">
          <TreeNode
            name="Maps"
            open={false}
            icon={
              <FolderIcon>
                <rect x="5" y="8" width="10" height="11" fill="#a9d3bb" stroke="#5c5c5c" strokeWidth="1.400" />
                <path d="M12.500 10l-3 3.500L8 17l3-1.500 2-2z" fill="#e3f2f4" />
              </FolderIcon>
            }
          />
          <TreeNode
            name="Toolboxes"
            open
            icon={
              <FolderIcon>
                <g transform="translate(4 8) scale(0.62 0.7)">
                  <ToolboxShape />
                </g>
              </FolderIcon>
            }
          />
          <TreeNode level={1} name="arcpy1.tbx" icon={<ToolboxIcon home />} />
          <TreeNode level={1} name="Plant Treatment Tools.atbx" icon={<ToolboxIcon />} selected />
          <TreeNode
            name="Notebooks"
            open={false}
            icon={
              <FolderIcon>
                <g transform="translate(3 6.500) scale(0.720 0.690)">
                  <NotebookGlyph />
                </g>
              </FolderIcon>
            }
          />
          <TreeNode
            name="Databases"
            open={false}
            icon={
              <FolderIcon>
                <path d="M4 10v6.500c0 3 11 3 11 0V10" fill="#fff" stroke="#666" strokeWidth="1.300" />
                <ellipse cx="9.500" cy="10" rx="5.500" ry="2" fill="#fff" stroke="#666" strokeWidth="1.300" />
              </FolderIcon>
            }
          />
          <TreeNode
            name="Styles"
            open={false}
            icon={
              <FolderIcon>
                <path d="M3 12c1-4 8-5.500 11-3 2 2-1 3 0 5s-3 4-6 3-6-2-5-5z" fill="#fff" stroke="#666" strokeWidth="1.300" />
                <path d="m10 18 8-8" stroke="#666" strokeWidth="1.800" />
                <circle cx="7" cy="11" r="1" fill="#6aa5d8" />
                <circle cx="9.500" cy="18.300" r="1.600" fill="#cb6b4a" />
              </FolderIcon>
            }
          />
          <TreeNode
            name="Folders"
            open
            icon={
              <FolderIcon>
                <path d="M8.500 10.500 14 14.200 8.500 18z" fill="#555" stroke="#fff" strokeWidth="0.800" />
              </FolderIcon>
            }
          />
          <TreeNode
            level={1}
            name="arcpy1"
            open
            icon={
              <Icon w={23} h={21}>
                <g transform="translate(0 1)">
                  <FolderShape />
                </g>
                <HomeBadge />
              </Icon>
            }
          />
          {[".backups", ".ipynb_checkpoints", "img", "ImportLog", "scripts"].map((n) => (
            <TreeNode key={n} level={2} name={n} open={false} icon={<FolderIcon />} />
          ))}
          <TreeNode level={2} name="arcpy1.gdb" open={false} icon={<DbIcon />} />
          <TreeNode level={2} name="arcpy1.tbx" open={false} icon={<ToolboxIcon />} />
          <TreeNode level={2} name="Plant Treatment Tools.atbx" open={false} icon={<ToolboxIcon />} />
          <TreeNode level={2} name="New Notebook (1).ipynb" icon={<NotebookIcon />} />
          <TreeNode level={2} name="New Notebook.ipynb" icon={<NotebookIcon />} />
          <TreeNode level={1} name="Data" open={false} icon={<FolderIcon />} />
          <TreeNode
            name="Locators"
            open={false}
            icon={
              <FolderIcon>
                <path d="M3.500 13.500V19h9v-5.500L8 9z" fill="#fff" stroke="#5f9b60" strokeWidth="1" />
                <path d="M1.500 14 8 7.200l6.500 6.800z" fill="#cf5b3c" />
                <path d="M6.500 14.500h3V18h-3z" fill="#3f95d0" />
              </FolderIcon>
            }
          />
        </ul>
      </div>
      <div className="flex h-[26px] shrink-0 text-sm text-[#3c3c3c]">
        <button type="button" className="w-[67px] border border-t-0 border-[#cfcfcf] bg-[#f7f9f8] text-[#0071bc]">
          Catalog
        </button>
        <div className="flex flex-1 border-t border-[#cfcfcf]">
          {catalogTabs.map((t) => (
            <button key={t.name} type="button" className={`whitespace-nowrap ${t.width}`}>
              {t.name}
            </button>
          ))}
        </div>
      </div>
    </aside>
  );
}

/* ---------- dialog ---------- */

type FieldProps = { id: string; label: string; value: string; focused?: boolean; readOnly?: boolean };

function Field({ id, label, value, focused = false, readOnly = false }: FieldProps) {
  return (
    <div className="flex items-center">
      <label htmlFor={id} className="w-[84px] shrink-0">
        {label}
      </label>
      <input
        id={id}
        defaultValue={value}
        readOnly={readOnly}
        className={`h-[30px] min-w-0 flex-1 border bg-white px-0.5 outline-none ${focused ? "border-[#7eb4ea]" : "border-[#8f8f8f]"} ${readOnly ? "text-[#6b6b6b]" : "text-[#3c3c3c]"}`}
      />
    </div>
  );
}

function NewScriptDialog() {
  return (
    <div
      role="dialog"
      aria-labelledby="dialog-title"
      className="absolute inset-x-0 top-[225px] mx-auto w-[1000px] border border-[#c8c8c8] bg-[#f7f9f8] px-3 pb-[11px] text-sm text-[#454545] shadow-[0_2px_14px_rgba(0,0,0,0.28)]"
    >
      <div className="flex h-11 items-center justify-between">
        <h2 id="dialog-title" className="pt-0.5 text-[19px] leading-6 text-[#636363]">
          New Script
        </h2>
        <button type="button" aria-label="Close dialog" className="mr-0.5 pb-1">
          <CloseIcon />
        </button>
      </div>
      <div className="flex gap-3">
        <nav className="flex w-[200px] flex-col border border-t-0 border-[#cfcfcf] bg-white">
          <button type="button" className="-mx-px h-7 bg-[#9fd4f3] pl-3 text-left font-bold">
            General
          </button>
          {["Parameters", "Execution", "Validation"].map((n) => (
            <button key={n} type="button" className="h-[29px] pl-[11px] text-left">
              {n}
            </button>
          ))}
        </nav>
        <form className="flex-1 border border-[#cfcfcf] bg-white pt-[11px] pr-[13px] pb-[18px] pl-3">
          <div className="flex flex-col gap-2.5">
            <Field id="tool-name" label="Name:" value="CreateBuffers" focused />
            <Field id="tool-label" label="Label:" value="Create Buffers" />
            <Field id="tool-box" label="Toolbox:" value="C:\arcpy1\arcpy1\Plant Treatment Tools.atbx" readOnly />
          </div>
          <div className="mt-[13px] flex">
            <label htmlFor="tool-description" className="w-[84px] shrink-0 pt-[3px] whitespace-nowrap">
              Description:
            </label>
            <textarea id="tool-description" className="block h-[141px] min-w-0 flex-1 resize-none border border-[#8f8f8f] bg-white outline-none" />
          </div>
          <p className="mt-2.5 leading-5">Attributes:</p>
          <h3 className="mt-[15px] text-[15px] leading-5 font-medium text-[#636363]">Options</h3>
          <p className="mt-3.5 leading-5">
            <a href="#learn" className="text-[#1c6b2a]">
              Learn more about script tools
            </a>
          </p>
        </form>
      </div>
      <div className="mt-5 flex justify-end gap-3">
        {["OK", "Cancel"].map((n) => (
          <button key={n} type="button" className="h-[30px] w-[88px] border border-[#555] bg-white">
            {n}
          </button>
        ))}
      </div>
    </div>
  );
}

export default function App() {
  return (
    <div className="relative flex min-h-screen flex-col overflow-hidden bg-[#f1f1f1] font-['Open_Sans','Noto_Sans',sans-serif]">
      <Ribbon />
      <div className="flex flex-1 gap-2 pr-[3px] pb-1.5 pl-1">
        <ContentsPane />
        <MapView />
        <CatalogPane />
      </div>
      <NewScriptDialog />
    </div>
  );
}
